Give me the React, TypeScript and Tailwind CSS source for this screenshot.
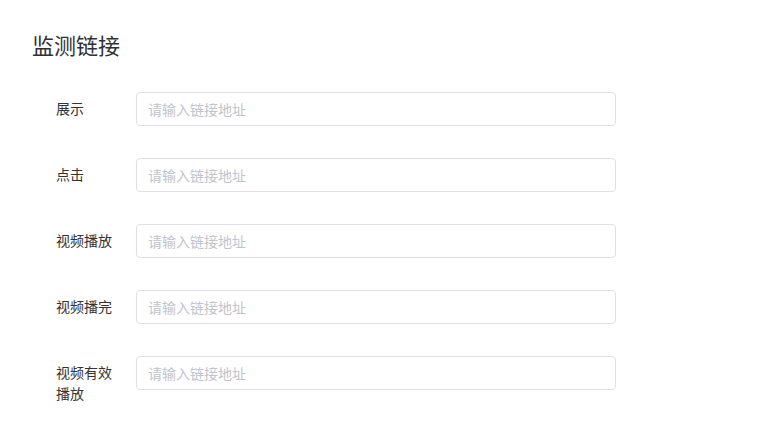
const fields = ['展示', '点击', '视频播放', '视频播完', '视频有效播放'];

export default function App() {
  return (
    <div className="min-h-[425px] w-full bg-white pl-[32px] pt-[29px] font-['Noto_Sans_CJK_SC','Noto_Sans',sans-serif]">
      <h2 className="text-[22px] leading-[30px] text-[#303133]">监测链接</h2>

      <div className="mt-[33px] flex flex-col gap-[32px] pl-[24px]">
        {fields.map((label) => (
          <div key={label} className="flex items-start">
            <div className="w-[80px] shrink-0 pr-[20px] pt-[6px] text-[14px] leading-[21px] text-[#333]">
              {label}
            </div>
            <input
              type="text"
              placeholder="请输入链接地址"
              className="h-[34px] w-[480px] rounded-[4px] border border-[#dcdfe6] bg-white px-[11px] text-[14px] text-[#333] outline-none placeholder:text-[#c0c4cc]"
            />
          </div>
        ))}
      </div>
    </div>
  );
}
